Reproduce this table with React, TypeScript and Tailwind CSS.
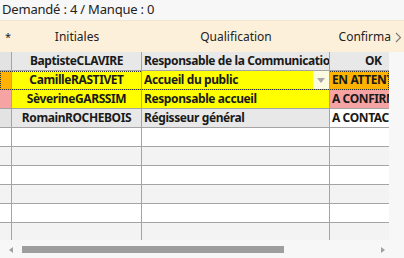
import React from "react";

const font = { fontFamily: '"Noto Sans", "Open Sans", sans-serif' };

type Row = {
  ind: string;
  name: string;
  qual: string;
  conf: string;
  rowBg: string;
  confBg: string;
  focus?: boolean;
  dropdown?: boolean;
  center?: boolean;
};

const rows: Row[] = [
  { ind: "bg-[#e3e3e3]", name: "BaptisteCLAVIRE", qual: "Responsable de la Communication", conf: "OK", rowBg: "bg-[#e8e8e8]", confBg: "bg-[#e8e8e8]", center: true },
  { ind: "bg-[#ffb300]", name: "CamilleRASTIVET", qual: "Accueil du public", conf: "EN ATTENTE", rowBg: "bg-[#ffff00]", confBg: "bg-[#ffb300]", focus: true, dropdown: true },
  { ind: "bg-[#f5a3a3]", name: "SèverineGARSSIM", qual: "Responsable accueil", conf: "A CONFIRMER", rowBg: "bg-[#ffff00]", confBg: "bg-[#f5a3a3]" },
  { ind: "bg-[#e3e3e3]", name: "RomainROCHEBOIS", qual: "Régisseur général", conf: "A CONTACTER", rowBg: "bg-[#e8e8e8]", confBg: "bg-white" },
];

export default function App() {
  return (
    <div className="w-[404px] h-[258px] bg-[#f7f7f7] overflow-hidden text-[#1a1a1a]" style={font}>
      <div className="h-[20px] pl-[2px] text-[13px] leading-[18px] tracking-[-0.2px] text-[#222]">Demandé : 4 / Manque : 0</div>
      {/* header */}
      <div className="h-[32px] flex bg-[#fdf0da] border-t border-[#f3e6cf] text-[12px] text-[#222]">
        <div className="w-[12px] shrink-0 pl-[5px] pt-[8px] text-[11px]">*</div>
        <div className="w-[130px] shrink-0 flex items-center justify-center pt-[1px]">Initiales</div>
        <div className="w-[188px] shrink-0 flex items-center justify-center pt-[1px]">Qualification</div>
        <div className="flex-1 flex items-center justify-end pr-[2px] gap-[4px] pt-[1px]">
          <span>Confirma</span>
          <svg width="7" height="11" viewBox="0 0 7 11"><path d="M1 1 L5.5 5.5 L1 10" fill="none" stroke="#777" strokeWidth="1.1" /></svg>
        </div>
      </div>
      {/* body */}
      <div className="h-[188px] overflow-hidden w-[389px] bg-white">
        {rows.map((r, i) => (
          <div key={i} className={`h-[19px] flex border-b border-[#a4a4a4] text-[12px] font-bold leading-[18px] tracking-[-0.4px] ${r.focus ? "outline outline-1 outline-dotted outline-[#333] -outline-offset-1" : ""}`}>
            <div className={`w-[12px] shrink-0 border-r border-[#a4a4a4] ${r.ind}`} />
            <div className={`w-[130px] shrink-0 border-r border-[#a4a4a4] text-center whitespace-nowrap overflow-hidden ${r.rowBg}`}>{r.name}</div>
            <div className={`w-[188px] shrink-0 border-r border-[#a4a4a4] pl-[2px] whitespace-nowrap overflow-hidden relative ${r.rowBg}`}>
              {r.qual}
              {r.dropdown && (
                <div className="absolute right-0 top-0 h-full w-[16px] bg-[#fbfbe0] flex items-center justify-center">
                  <svg width="8" height="5" viewBox="0 0 8 5"><path d="M0 0 L8 0 L4 5 Z" fill="#a8a8a8" /></svg>
                </div>
              )}
            </div>
            <div className={`flex-1 whitespace-nowrap overflow-hidden ${r.confBg} ${r.center ? "pl-[35px]" : "pl-[2px]"}`}>{r.conf}</div>
          </div>
        ))}
        {[0, 1, 2, 3, 4, 5].map((k) => (
          <div key={k} className={`h-[19px] flex border-b border-[#a4a4a4] ${k % 2 === 1 ? "bg-[#f3f3f3]" : "bg-white"}`}>
            <div className="w-[12px] shrink-0 border-r border-[#a4a4a4]" />
            <div className="w-[130px] shrink-0 border-r border-[#a4a4a4]" />
            <div className="w-[188px] shrink-0 border-r border-[#a4a4a4]" />
            <div className="flex-1" />
          </div>
        ))}
      </div>
      {/* scrollbar */}
      <div className="h-[18px] w-[389px] bg-[#f7f7f7] flex items-center">
        <div className="w-[22px] shrink-0 flex justify-center pt-[1px]">
          <svg width="4" height="6" viewBox="0 0 4 6"><path d="M4 0 L0 3 L4 6 Z" fill="#a0a0a0" /></svg>
        </div>
        <div className="w-[262px] h-[7px] bg-[#9e9e9e] mt-[1px]" />
        <div className="flex-1 flex justify-end pr-[4px] pt-[1px]">
          <svg width="4" height="6" viewBox="0 0 4 6"><path d="M0 0 L4 3 L0 6 Z" fill="#a0a0a0" /></svg>
        </div>
      </div>
    </div>
  );
}
